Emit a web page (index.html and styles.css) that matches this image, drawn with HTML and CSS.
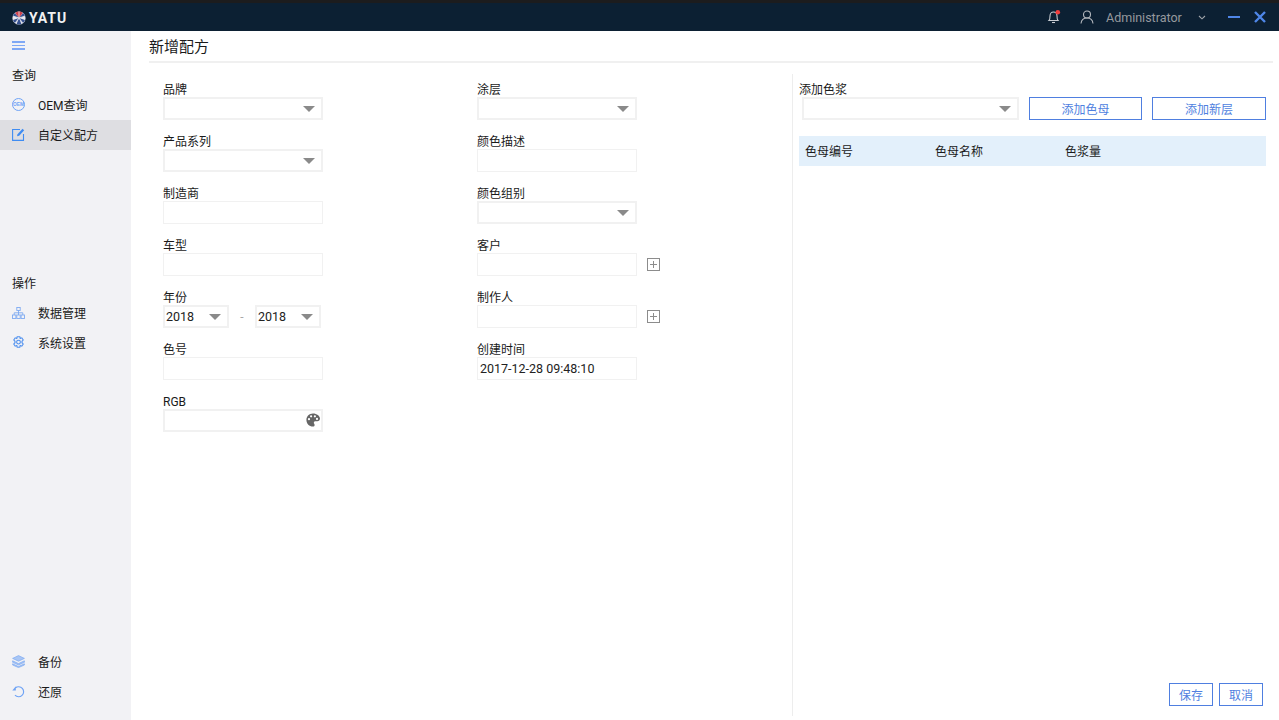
FILE: index.html
```html
<!DOCTYPE html>
<html lang="zh-CN">
<head>
  <meta charset="UTF-8">
  <title>新增配方</title>
  <link rel="stylesheet" href="styles.css">
</head>
<body>
  <header class="topbar">
    <div class="logo">
      <svg width="14" height="14" viewBox="0 0 14 14">
        <circle cx="7" cy="7" r="6.6" fill="#e8e8ee"/>
        <path d="M7 7 3.2 1.9A6.4 6.4 0 0 1 7 .6Z" fill="#d2404a"/>
        <path d="M7 7V.6a6.4 6.4 0 0 1 3.8 1.3Z" fill="#d2404a"/>
        <path d="M7 7 .9 5a6.4 6.4 0 0 1 2-3Z" fill="#35508f"/>
        <path d="M7 7l6.1-2a6.4 6.4 0 0 0-2-3Z" fill="#35508f"/>
        <path d="M7 7 1 9a6.4 6.4 0 0 0 2.3 3.2Z" fill="#35508f"/>
        <path d="M7 7l6 2a6.4 6.4 0 0 1-2.3 3.2Z" fill="#35508f"/>
        <path d="M7 7l-2.4 6a6.4 6.4 0 0 0 4.8 0Z" fill="#35508f"/>
        <path d="M7 .6V7L3.2 12M7 7l3.800 5M7 7 .9 5M7 7l6.100-2" stroke="#e8e8ee" stroke-width=".8" fill="none"/>
      </svg>
      <span class="logo-text">YATU</span>
    </div>
    <div class="top-right">
      <svg class="bell" width="14" height="16" viewBox="0 0 14 16" fill="none" stroke="#c8ccd2" stroke-width="1.1">
        <path d="M2 11.5c1-1 1-2 1-4.500C3 4.500 4.500 3 6.500 3S10 4.500 10 7s0 3.500 1 4.500Z"/>
        <path d="M5 13.500h3"/>
        <circle cx="10.800" cy="3.200" r="2.300" fill="#f23c3c" stroke="none"/>
      </svg>
      <svg class="user" width="14" height="14" viewBox="0 0 14 14" fill="none" stroke="#b4b8be" stroke-width="1.100">
        <circle cx="7" cy="4.500" r="3.500"/>
        <path d="M1 13.500c.4-3.500 2.800-5.500 6-5.500s5.600 2 6 5.500"/>
      </svg>
      <span class="username">Administrator</span>
      <svg class="caret" width="8" height="5" viewBox="0 0 8 5" fill="none" stroke="#a0a4aa" stroke-width="1.100"><path d="M1 1l3 2.800L7 1"/></svg>
      <span class="win-min"></span>
      <svg class="win-close" width="12" height="12" viewBox="0 0 12 12" stroke="#4f86e8" stroke-width="2.400"><path d="M1 1l10 10M11 1 1 11"/></svg>
    </div>
  </header>

  <div class="layout">
    <nav class="sidebar">
      <div class="menu-btn"><span></span><span></span><span></span></div>

      <div class="nav-title">查询</div>
      <a class="nav-item">
        <svg width="13" height="13" viewBox="0 0 13 13" fill="none" stroke="#6fa3f5">
          <circle cx="6.500" cy="6.500" r="6"/>
          <text x="6.500" y="8.300" font-size="4.800" font-weight="700" text-anchor="middle" fill="#6fa3f5" stroke="none" font-family="Liberation Sans, sans-serif">OEM</text>
        </svg>
        OEM查询
      </a>
      <a class="nav-item active">
        <svg width="13" height="13" viewBox="0 0 13 13" fill="none" stroke="#3f8cf2" stroke-width="1.100">
          <path d="M8 1.500H.6v10.900h10.900V6"/>
          <path d="M5 8.200l.5-2L10.500.8l1.700 1.500-5 5.400Z" fill="#3f8cf2" stroke="none"/>
        </svg>
        自定义配方
      </a>

      <div class="nav-title second">操作</div>
      <a class="nav-item">
        <svg width="13" height="12" viewBox="0 0 13 12" fill="none" stroke="#7eaaf2" stroke-width=".9">
          <rect x="4.800" y=".5" width="3.400" height="3"/>
          <rect x=".5" y="8" width="3.400" height="3.500"/>
          <rect x="4.800" y="8" width="3.400" height="3.500"/>
          <rect x="9.100" y="8" width="3.400" height="3.500"/>
          <path d="M6.500 3.500V8M2.200 8V5.800h8.600V8"/>
        </svg>
        数据管理
      </a>
      <a class="nav-item">
        <svg width="13" height="13" viewBox="0 0 13 13" fill="none" stroke="#4f90ee" stroke-width="1.100">
          <path d="M5.200.7h2.600l.4 1.700 1.600-.6 1.400 2.200-1.200 1.300v1.400l1.200 1.300-1.400 2.200-1.600-.6-.4 1.700H5.200l-.4-1.700-1.600.6-1.400-2.200L3 6.700V5.300L1.800 4l1.400-2.200 1.600.6Z"/>
          <circle cx="6.500" cy="6.100" r="1.900"/>
        </svg>
        系统设置
      </a>

      <div class="nav-bottom">
        <a class="nav-item">
          <svg width="13" height="13" viewBox="0 0 13 13" fill="#a9c6f5" stroke="#7eaaf2" stroke-width=".7">
            <path d="M6.500.6 12.400 3.400 6.500 6.200.6 3.400Z"/>
            <path d="M.6 5.800l5.900 2.800 5.900-2.800v1.500L6.500 10 .6 7.300Z"/>
            <path d="M.6 8.800l5.900 2.800 5.900-2.800v1.200l-5.900 2.600L.6 10Z"/>
          </svg>
          备份
        </a>
        <a class="nav-item">
          <svg width="13" height="13" viewBox="0 0 13 13" fill="none" stroke="#6fa3f5" stroke-width="1.200">
            <path d="M3.300 3A5 5 0 1 1 3 10.200"/>
            <path d="M.3 5.600 3.800 1.200V5.600Z" fill="#6fa3f5" stroke="none"/>
          </svg>
          还原
        </a>
      </div>
    </nav>

    <main class="content">
      <h1 class="page-title">新增配方</h1>
      <div class="panels">
        <div class="form-side">
          <div class="form-col">
            <div class="field">
              <label>品牌</label>
              <div class="select"><span class="arrow"></span></div>
            </div>
            <div class="field">
              <label>产品系列</label>
              <div class="select"><span class="arrow"></span></div>
            </div>
            <div class="field">
              <label>制造商</label>
              <div class="input"></div>
            </div>
            <div class="field">
              <label>车型</label>
              <div class="input"></div>
            </div>
            <div class="field">
              <label>年份</label>
              <div class="year-row">
                <div class="select year"><span class="value">2018</span><span class="arrow"></span></div>
                <span class="dash">-</span>
                <div class="select year"><span class="value">2018</span><span class="arrow"></span></div>
              </div>
            </div>
            <div class="field">
              <label>色号</label>
              <div class="input"></div>
            </div>
            <div class="field">
              <label>RGB</label>
              <div class="select">
                <svg class="palette" width="14" height="14" viewBox="0 0 14 14">
                  <path fill-rule="evenodd" fill="#666" d="M7 .5C3.300.5.400 3.300.400 6.900c0 3.600 2.900 6.600 6.500 6.600 1 0 1.700-.7 1.700-1.600 0-.4-.2-.8-.4-1.100-.3-.3-.4-.6-.4-1 0-.9.700-1.500 1.600-1.500h1.900c1.600 0 2.700-1.200 2.700-2.700C13.900 2.900 10.800.5 7 .5ZM3 7.300a1.100 1.100 0 1 1 0-2.200 1.100 1.100 0 0 1 0 2.200Zm2.100-2.900a1.100 1.100 0 1 1 0-2.200 1.100 1.100 0 0 1 0 2.200Zm3.800 0a1.100 1.100 0 1 1 0-2.200 1.100 1.100 0 0 1 0 2.200ZM11 7a1.100 1.100 0 1 1 0-2.200A1.100 1.100 0 0 1 11 7Z"/>
                </svg>
              </div>
            </div>
          </div>

          <div class="form-col">
            <div class="field">
              <label>涂层</label>
              <div class="select"><span class="arrow"></span></div>
            </div>
            <div class="field">
              <label>颜色描述</label>
              <div class="input"></div>
            </div>
            <div class="field">
              <label>颜色组别</label>
              <div class="select"><span class="arrow"></span></div>
            </div>
            <div class="field">
              <label>客户</label>
              <div class="with-plus">
                <div class="input"></div>
                <span class="plus"></span>
              </div>
            </div>
            <div class="field">
              <label>制作人</label>
              <div class="with-plus">
                <div class="input"></div>
                <span class="plus"></span>
              </div>
            </div>
            <div class="field">
              <label>创建时间</label>
              <div class="input"><span class="value">2017-12-28 09:48:10</span></div>
            </div>
          </div>
        </div>

        <div class="paste-side">
          <div class="field paste-field">
            <label>添加色浆</label>
            <div class="paste-row">
              <div class="select paste-select"><span class="arrow"></span></div>
              <button class="btn color-btn">添加色母</button>
              <button class="btn layer-btn">添加新层</button>
            </div>
          </div>
          <div class="table-head">
            <span>色母编号</span>
            <span>色母名称</span>
            <span>色浆量</span>
          </div>
          <div class="actions">
            <button class="btn small">保存</button>
            <button class="btn small">取消</button>
          </div>
        </div>
      </div>
    </main>
  </div>
</body>
</html>
```

FILE: styles.css
```css
* {
  box-sizing: border-box;
}

html, body {
  height: 100%;
}

body {
  margin: 0;
  overflow: hidden;
  background-color: #ffffff;
  color: #1a1a1a;
  font-family: Roboto, "Noto Sans CJK SC", sans-serif;
  font-size: 12px;
}

.topbar {
  display: flex;
  align-items: center;
  justify-content: space-between;
  height: 31px;
  padding: 0 13px 0 12px;
  background-color: #0c2033;
  border-top: 3px solid #1c1c1e;
}

.logo {
  display: flex;
  align-items: center;
  gap: 3px;
  height: 100%;
  padding-top: 1px;
}

.logo-text {
  color: #f2f2f2;
  font-family: Roboto, sans-serif;
  font-size: 14px;
  font-weight: 700;
  letter-spacing: 1px;
  line-height: 14px;
}

.top-right {
  display: flex;
  align-items: center;
}

.bell {
  margin-right: 19px;
}

.user {
  margin-right: 12px;
}

.username {
  width: 92px;
  color: #96999e;
  font-size: 12.500px;
}

.caret {
  margin-right: 22px;
}

.win-min {
  width: 12px;
  height: 2px;
  margin-right: 14px;
  background-color: #4f86e8;
}

.layout {
  display: flex;
  height: 689px;
}

.sidebar {
  display: flex;
  flex-direction: column;
  flex: none;
  width: 131px;
  background-color: #f2f2f5;
}

.menu-btn {
  display: flex;
  flex-direction: column;
  gap: 2px;
  width: 13px;
  margin: 10px 0 0 12px;
}

.menu-btn span {
  height: 1.500px;
  background-color: #7fa8f5;
}

.nav-title {
  height: 30px;
  margin-top: 10px;
  padding-left: 12px;
  line-height: 32px;
}

.nav-title.second {
  margin-top: 118px;
}

.nav-item {
  display: flex;
  align-items: center;
  gap: 13px;
  height: 30px;
  padding-left: 12px;
  color: #1a1a1a;
}

.nav-item.active {
  background-color: #dedee2;
}

.nav-bottom {
  margin-top: auto;
  margin-bottom: 14px;
}

.content {
  flex: 1;
  padding: 0 6px 5px 18px;
}

.page-title {
  height: 32px;
  margin: 0;
  border-bottom: 2px solid #f0f0f0;
  font-size: 15px;
  font-weight: 400;
  line-height: 32px;
}

.panels {
  display: flex;
  height: 642px;
  margin-top: 11px;
}

.form-side {
  display: flex;
  width: 644px;
  padding: 8px 0 0 14px;
  border-right: 1px solid #ededed;
}

.form-col {
  width: 314px;
}

.field {
  height: 52px;
}

.field label {
  display: block;
  height: 15px;
  line-height: 17px;
}

.select, .input {
  position: relative;
  width: 160px;
  height: 23px;
  background-color: #ffffff;
}

.select {
  border: 2px solid #f1f1f1;
}

.input {
  border: 1px solid #f1f1f1;
}

.value {
  display: block;
  color: #222222;
  font-size: 12.500px;
  line-height: 19px;
  padding-left: 1px;
}

.input .value {
  line-height: 22px;
  padding-left: 2px;
}

.arrow {
  position: absolute;
  top: 7px;
  right: 6px;
  border-top: 6px solid #8a8a8a;
  border-left: 6px solid transparent;
  border-right: 6px solid transparent;
}

.palette {
  position: absolute;
  top: 2px;
  right: 1px;
}

.year-row {
  display: flex;
  align-items: center;
}

.select.year {
  width: 66px;
}

.dash {
  width: 26px;
  color: #a8a8a8;
  text-align: center;
}

.with-plus {
  display: flex;
  align-items: center;
  gap: 10px;
}

.plus {
  position: relative;
  width: 13px;
  height: 13px;
  border: 1px solid #8c8c8c;
  margin-top: -1px;
}

.plus::before, .plus::after {
  content: "";
  position: absolute;
  background-color: #8c8c8c;
}

.plus::before {
  left: 2px;
  top: 5px;
  width: 7px;
  height: 1px;
}

.plus::after {
  left: 5px;
  top: 2px;
  width: 1px;
  height: 7px;
}

.paste-side {
  position: relative;
  flex: 1;
  padding: 8px 0 0 6px;
}

.field.paste-field {
  height: 54px;
}

.paste-row {
  display: flex;
  align-items: center;
}

.paste-select {
  width: 217px;
  margin-left: 3px;
}

.btn {
  padding: 0;
  background-color: #ffffff;
  border: 1px solid #4f7fe0;
  border-radius: 0;
  color: #4f7fe0;
  font-family: inherit;
  font-size: 12px;
}

.color-btn, .layer-btn {
  height: 23px;
  margin-left: 10px;
}

.color-btn {
  width: 113px;
}

.layer-btn {
  width: 114px;
}

.table-head {
  display: flex;
  align-items: center;
  width: 467px;
  height: 30px;
  padding: 0 0 2px 6px;
  background-color: #e3f0fb;
}

.table-head span {
  width: 130px;
}

.actions {
  position: absolute;
  right: 10px;
  bottom: 10px;
  display: flex;
  gap: 6px;
}

.btn.small {
  width: 44px;
  height: 23px;
}
```
